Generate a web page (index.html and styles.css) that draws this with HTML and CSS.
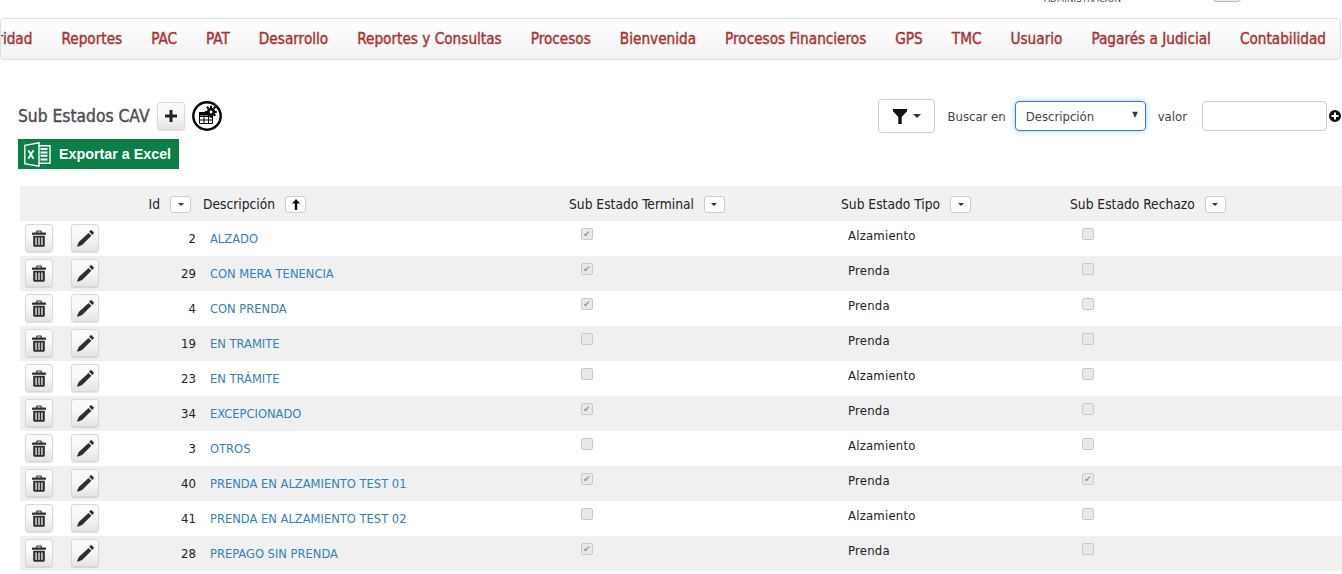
FILE: index.html
```html
<!DOCTYPE html>
<html lang="es">
<head>
<meta charset="utf-8">
<title>Sub Estados CAV</title>
<link rel="stylesheet" href="styles.css">
</head>
<body>
<svg class="sprite" aria-hidden="true">
  <symbol id="i-trash" viewBox="0 0 14 17">
    <path d="M5.200 0.500h3.600a1 1 0 0 1 1 1V2.500H13a1 1 0 0 1 1 1v1.300H0V3.500a1 1 0 0 1 1-1h3.200V1.500a1 1 0 0 1 1-1zM5.400 1.600v.9h3.200v-.9z" fill-rule="evenodd"/>
    <path fill-rule="evenodd" d="M1.200 5.800h11.600V15.200a1.500 1.500 0 0 1-1.500 1.500H2.700a1.500 1.500 0 0 1-1.500-1.500zM3.400 7.500v7.600h1.300V7.500zM6.350 7.500v7.600h1.300V7.500zM9.300 7.500v7.600h1.300V7.500z"/>
  </symbol>
  <symbol id="i-pencil" viewBox="0 0 17 17">
    <path d="M13.400 0.400a1 1 0 0 1 1.400 0l1.800 1.800a1 1 0 0 1 0 1.400l-1.300 1.300-3.200-3.200z"/>
    <path d="M11.500 2.900l2.900 2.900-9.300 9.300-4.400 1.600-.6-.6 1.700-4.200z"/>
  </symbol>
</svg>

<header class="topbar">
  <span class="topbar-user">ADMINISTRACIÓN</span>
  <span class="topbar-btn"></span>
</header>

<nav class="menu">
  <a>Seguridad</a><a>Reportes</a><a>PAC</a><a>PAT</a><a>Desarrollo</a><a>Reportes y Consultas</a><a>Procesos</a><a>Bienvenida</a><a>Procesos Financieros</a><a>GPS</a><a>TMC</a><a>Usuario</a><a>Pagarés a Judicial</a><a>Contabilidad</a>
</nav>

<main class="content">
  <div class="toolbar">
    <div class="title-group">
      <h1 class="title">Sub Estados CAV</h1>
      <button class="btn btn-add" type="button">
        <svg class="ic-plus" viewBox="0 0 12 12"><path d="M4.500 0h3v4.500H12v3H7.500V12h-3V7.500H0v-3h4.500z"/></svg>
      </button>
      <svg class="ic-config" viewBox="0 0 30 30">
        <circle cx="15" cy="15" r="13.700" fill="#fff" stroke="#000" stroke-width="2.400"/>
        <path d="M7.500 11.500h13v11h-13zM7.500 15.500h13M7.500 19h13M12 11.500v11M16.500 11.500v11" fill="none" stroke="#000" stroke-width="1"/>
        <path d="M7.500 11h9v3.500h-9z"/>
        <circle cx="19" cy="11" r="4.300"/>
        <path d="M18 4.700h2v2.500h-2zM18 14.800h2v2h-2zM12.700 10h2.500v2h-2.500zM22.800 10h2v2h-2zM14.100 6.500l1.400-1.400 1.700 1.700-1.400 1.400zM21 13.700l1.400-1.400 1.700 1.700-1.400 1.400zM21 6.800l1.700-1.700 1.400 1.400-1.700 1.700z"/>
        <circle cx="19" cy="11" r="1.400" fill="#fff"/>
      </svg>
    </div>
    <div class="search-group">
      <button class="btn-filter" type="button">
        <svg class="ic-funnel" viewBox="0 0 14 15"><path d="M0 0h14v2.200L8.700 8v7H5.300V8L0 2.200z"/></svg>
        <span class="caret"></span>
      </button>
      <label class="lbl lbl-search" for="campo">Buscar en</label>
      <span class="select-box" id="campo">Descripción<span class="select-arrow">▼</span></span>
      <label class="lbl lbl-value" for="valor">valor</label>
      <input class="value-input" id="valor" type="text">
      <svg class="ic-pluscircle" viewBox="0 0 12 12"><path fill-rule="evenodd" d="M6 0a6 6 0 1 1 0 12A6 6 0 0 1 6 0zM5 2.500v2.500H2.500v2H5v2.500h2V7h2.500V5H7V2.500z"/></svg>
    </div>
  </div>

  <a class="excel">
    <svg class="ic-excel" viewBox="0 0 27 25">
      <path d="M14 3.800h12v17.400H14z" fill="#0a7f48" stroke="#fff" stroke-width="1.400"/>
      <path d="M16.500 7h7M16.500 10.400h7M16.500 13.800h7M16.500 17.500h7" stroke="#fff" stroke-width="2"/>
      <path d="M0.800 3.400L15 0.800v23.400L0.800 21.600z" fill="#0a7f48" stroke="#fff" stroke-width="1.400"/>
      <path d="M4.300 8.300l5.200 8.400M9.500 8.300l-5.200 8.400" stroke="#fff" stroke-width="1.800"/>
    </svg>
    <span>Exportar a Excel</span>
  </a>

  <table class="grid">
    <colgroup>
      <col class="c-del"><col class="c-edit"><col class="c-id"><col class="c-desc"><col class="c-term"><col class="c-tipo"><col class="c-rech">
    </colgroup>
    <thead>
      <tr>
        <th></th><th></th>
        <th class="th-id"><span class="th-in">Id <span class="sort"><span class="caret"></span></span></span></th>
        <th class="th-desc"><span class="th-in">Descripción <span class="sort sort-up"><svg class="ic-up" viewBox="0 0 8 11"><path d="M4 0l4 4.500H5.200V11H2.800V4.500H0z"/></svg></span></span></th>
        <th><span class="th-in">Sub Estado Terminal <span class="sort"><span class="caret"></span></span></span></th>
        <th><span class="th-in">Sub Estado Tipo <span class="sort"><span class="caret"></span></span></span></th>
        <th><span class="th-in">Sub Estado Rechazo <span class="sort"><span class="caret"></span></span></span></th>
      </tr>
    </thead>
    <tbody>
      <tr><td class="td-btn"><button class="btn btn-row" type="button"><svg class="ic-trash"><use href="#i-trash"/></svg></button></td><td class="td-btn"><button class="btn btn-row" type="button"><svg class="ic-pencil"><use href="#i-pencil"/></svg></button></td><td class="td-id">2</td><td class="td-desc"><a>ALZADO</a></td><td class="td-check"><input type="checkbox" disabled checked></td><td class="td-tipo">Alzamiento</td><td class="td-check"><input type="checkbox" disabled></td></tr>
      <tr><td class="td-btn"><button class="btn btn-row" type="button"><svg class="ic-trash"><use href="#i-trash"/></svg></button></td><td class="td-btn"><button class="btn btn-row" type="button"><svg class="ic-pencil"><use href="#i-pencil"/></svg></button></td><td class="td-id">29</td><td class="td-desc"><a>CON MERA TENENCIA</a></td><td class="td-check"><input type="checkbox" disabled checked></td><td class="td-tipo">Prenda</td><td class="td-check"><input type="checkbox" disabled></td></tr>
      <tr><td class="td-btn"><button class="btn btn-row" type="button"><svg class="ic-trash"><use href="#i-trash"/></svg></button></td><td class="td-btn"><button class="btn btn-row" type="button"><svg class="ic-pencil"><use href="#i-pencil"/></svg></button></td><td class="td-id">4</td><td class="td-desc"><a>CON PRENDA</a></td><td class="td-check"><input type="checkbox" disabled checked></td><td class="td-tipo">Prenda</td><td class="td-check"><input type="checkbox" disabled></td></tr>
      <tr><td class="td-btn"><button class="btn btn-row" type="button"><svg class="ic-trash"><use href="#i-trash"/></svg></button></td><td class="td-btn"><button class="btn btn-row" type="button"><svg class="ic-pencil"><use href="#i-pencil"/></svg></button></td><td class="td-id">19</td><td class="td-desc"><a>EN TRAMITE</a></td><td class="td-check"><input type="checkbox" disabled></td><td class="td-tipo">Prenda</td><td class="td-check"><input type="checkbox" disabled></td></tr>
      <tr><td class="td-btn"><button class="btn btn-row" type="button"><svg class="ic-trash"><use href="#i-trash"/></svg></button></td><td class="td-btn"><button class="btn btn-row" type="button"><svg class="ic-pencil"><use href="#i-pencil"/></svg></button></td><td class="td-id">23</td><td class="td-desc"><a>EN TRÁMITE</a></td><td class="td-check"><input type="checkbox" disabled></td><td class="td-tipo">Alzamiento</td><td class="td-check"><input type="checkbox" disabled></td></tr>
      <tr><td class="td-btn"><button class="btn btn-row" type="button"><svg class="ic-trash"><use href="#i-trash"/></svg></button></td><td class="td-btn"><button class="btn btn-row" type="button"><svg class="ic-pencil"><use href="#i-pencil"/></svg></button></td><td class="td-id">34</td><td class="td-desc"><a>EXCEPCIONADO</a></td><td class="td-check"><input type="checkbox" disabled checked></td><td class="td-tipo">Prenda</td><td class="td-check"><input type="checkbox" disabled></td></tr>
      <tr><td class="td-btn"><button class="btn btn-row" type="button"><svg class="ic-trash"><use href="#i-trash"/></svg></button></td><td class="td-btn"><button class="btn btn-row" type="button"><svg class="ic-pencil"><use href="#i-pencil"/></svg></button></td><td class="td-id">3</td><td class="td-desc"><a>OTROS</a></td><td class="td-check"><input type="checkbox" disabled></td><td class="td-tipo">Alzamiento</td><td class="td-check"><input type="checkbox" disabled></td></tr>
      <tr><td class="td-btn"><button class="btn btn-row" type="button"><svg class="ic-trash"><use href="#i-trash"/></svg></button></td><td class="td-btn"><button class="btn btn-row" type="button"><svg class="ic-pencil"><use href="#i-pencil"/></svg></button></td><td class="td-id">40</td><td class="td-desc"><a>PRENDA EN ALZAMIENTO TEST 01</a></td><td class="td-check"><input type="checkbox" disabled checked></td><td class="td-tipo">Prenda</td><td class="td-check"><input type="checkbox" disabled checked></td></tr>
      <tr><td class="td-btn"><button class="btn btn-row" type="button"><svg class="ic-trash"><use href="#i-trash"/></svg></button></td><td class="td-btn"><button class="btn btn-row" type="button"><svg class="ic-pencil"><use href="#i-pencil"/></svg></button></td><td class="td-id">41</td><td class="td-desc"><a>PRENDA EN ALZAMIENTO TEST 02</a></td><td class="td-check"><input type="checkbox" disabled></td><td class="td-tipo">Alzamiento</td><td class="td-check"><input type="checkbox" disabled></td></tr>
      <tr><td class="td-btn"><button class="btn btn-row" type="button"><svg class="ic-trash"><use href="#i-trash"/></svg></button></td><td class="td-btn"><button class="btn btn-row" type="button"><svg class="ic-pencil"><use href="#i-pencil"/></svg></button></td><td class="td-id">28</td><td class="td-desc"><a>PREPAGO SIN PRENDA</a></td><td class="td-check"><input type="checkbox" disabled checked></td><td class="td-tipo">Prenda</td><td class="td-check"><input type="checkbox" disabled></td></tr>
    </tbody>
  </table>
</main>
</body>
</html>
```

FILE: styles.css
```css
* { box-sizing: border-box; }
html, body { margin: 0; padding: 0; height: 100%; overflow: hidden; }
body {
  background: #fff;
  color: #222;
  font-family: "DejaVu Sans Condensed", "DejaVu Sans", sans-serif;
  font-stretch: condensed;
  font-size: 13px;
}
.sprite { display: none; }

.topbar {
  height: 18px;
  overflow: hidden;
  display: flex;
  justify-content: flex-end;
  align-items: flex-end;
  padding: 0 101px 16px 0;
  gap: 92px;
}
.topbar-user { font-size: 9.8px; line-height: 13px; color: #555; flex: none; margin-bottom: -3px; }
.topbar-btn {
  flex: none;
  width: 28px;
  height: 20px;
  border: 1px solid #bbb;
  border-radius: 3px;
  background: #eee;
}

.menu {
  height: 42px;
  display: flex;
  justify-content: flex-end;
  align-items: center;
  gap: 29px;
  padding-right: 14px;
  margin-right: 1px;
  overflow: hidden;
  border: 1px solid #ddd;
  border-radius: 4px;
  background: linear-gradient(#fff, #f2f2f2);
}
.menu a {
  flex: none;
  color: #a93232;
  font-size: 15.2px;
  font-weight: 400;
  -webkit-text-stroke: 0.4px #a93232;
}

.content { padding: 39px 0 0 18px; }
.toolbar {
  display: flex;
  justify-content: space-between;
  align-items: center;
  height: 34px;
}
.title-group { display: flex; align-items: center; }
.title {
  margin: 0 7px 0 0;
  font-size: 17.3px;
  font-weight: 400;
  color: #4c4c55;
  -webkit-text-stroke: 0.4px #4c4c55;
}
.btn {
  display: inline-flex;
  align-items: center;
  justify-content: center;
  padding: 0;
  border: 1px solid #d8d8d8;
  border-radius: 3px;
  background: linear-gradient(#fafafa 40%, #e4e4e4);
  box-shadow: 0 1px 1px rgba(0,0,0,.12);
}
.btn-add { width: 28px; height: 28px; }
.ic-plus { width: 12px; height: 12px; fill: #222; }
.ic-config { width: 30px; height: 30px; margin-left: 7px; }

.search-group { display: flex; align-items: center; padding-right: 1px; }
.btn-filter {
  width: 57px;
  height: 34px;
  display: inline-flex;
  align-items: center;
  justify-content: center;
  gap: 6px;
  padding: 0;
  background: #fff;
  border: 1px solid #ccc;
  border-radius: 4px;
}
.ic-funnel { width: 14px; height: 15px; fill: #111; }
.caret {
  display: inline-block;
  width: 0;
  height: 0;
  border-top: 4px solid #333;
  border-left: 4px solid transparent;
  border-right: 4px solid transparent;
}
.lbl { font-size: 13px; color: #444; }
.lbl-search { margin: 0 9px 0 12px; }
.lbl-value { margin: 0 15px 0 12px; }
.select-box {
  position: relative;
  display: flex;
  align-items: center;
  width: 131px;
  height: 30px;
  padding-left: 10px;
  font-size: 13px;
  color: #444;
  border: 1px solid #3d78b0;
  border-radius: 4px;
  box-shadow: 0 0 6px rgba(102,175,233,.6);
}
.select-arrow { position: absolute; right: 7px; top: 8px; font-size: 8px; color: #333; }
.value-input {
  width: 125px;
  height: 30px;
  border: 1px solid #ccc;
  border-radius: 4px;
  background: #fff;
}
.ic-pluscircle { width: 12px; height: 12px; margin-left: 2px; fill: #111; }

.excel {
  display: flex;
  align-items: center;
  width: 161px;
  height: 30px;
  margin-top: 6px;
  padding-left: 6px;
  gap: 8px;
  background: #0a7f48;
  color: #fff;
  font-family: "Liberation Sans", sans-serif;
  font-stretch: normal;
  font-weight: 700;
  font-size: 14.3px;
}
.ic-excel { width: 27px; height: 25px; flex: none; }

.grid {
  width: 1322px;
  margin: 17px 0 0 2px;
  table-layout: fixed;
  border-collapse: collapse;
}
.c-del { width: 46px; }
.c-edit { width: 60px; }
.c-id { width: 77px; }
.c-desc { width: 359px; }
.c-term { width: 272px; }
.c-tipo { width: 229px; }
.c-rech { width: 279px; }

.grid tr { height: 35px; }
.grid thead tr { background: #f1f1f1; }
.grid tbody tr:nth-child(even) { background: #f0f0f0; }
.grid th { padding: 1px 0 0 7px; text-align: left; font-weight: 400; font-size: 13.7px; color: #222; }
.grid td { padding: 0; vertical-align: top; font-size: 13px; }
.th-in { display: inline-flex; align-items: center; gap: 10px; white-space: nowrap; }
.th-id { text-align: right !important; padding: 1px 12px 0 0 !important; }
.th-desc { padding-left: 0 !important; }
.sort {
  display: inline-flex;
  align-items: center;
  justify-content: center;
  width: 21px;
  height: 17px;
  background: #fff;
  border: 1px solid #ccc;
  border-radius: 3px;
}
.sort .caret { border-top-width: 3.500px; border-left-width: 3.500px; border-right-width: 3.500px; }
.ic-up { width: 8px; height: 11px; fill: #111; }

.td-btn { padding: 3px 0 0 5px !important; }
.btn-row { width: 28px; height: 28px; }
.ic-trash { width: 14px; height: 17px; fill: #2e2e2e; }
.ic-pencil { width: 17px; height: 17px; fill: #2e2e2e; }
.td-id { text-align: right; padding: 10px 7px 0 0 !important; }
.td-desc { padding: 10px 0 0 7px !important; font-size: 12.8px !important; }
.td-desc a { color: #3580b8; }
.td-tipo { padding: 7px 0 0 14px !important; letter-spacing: .2px; }
.td-check { padding: 7px 0 0 19px !important; }
.td-check input {
  appearance: none;
  -webkit-appearance: none;
  display: block;
  position: relative;
  width: 12px;
  height: 12px;
  margin: 0;
  background: #e9e9e9;
  border: 1px solid #c9c9c9;
  border-radius: 2px;
}
.td-check input:checked::after {
  content: "✔";
  position: absolute;
  left: 1px;
  top: -1px;
  font-size: 9px;
  line-height: 12px;
  color: #999;
}
```
